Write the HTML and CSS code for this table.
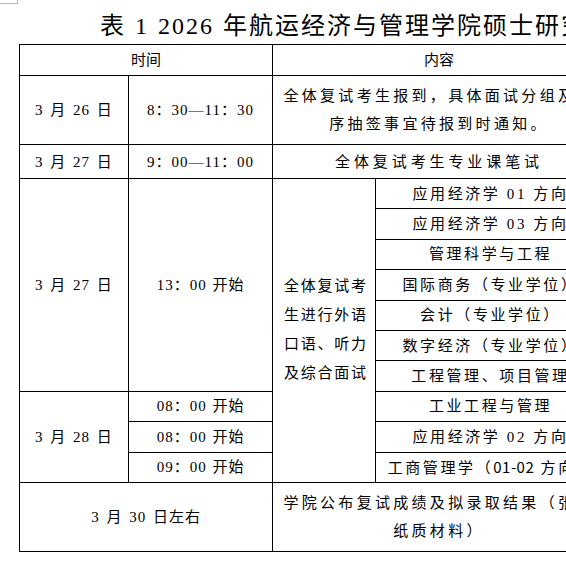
FILE: index.html
```html
<!DOCTYPE html>
<html lang="zh-CN">
<head>
<meta charset="utf-8">
<title>复试安排</title>
<link rel="stylesheet" href="styles.css">
</head>
<body>
<div class="page">
  <div class="corner-mark"></div>
  <h1 class="title">表 1 2026 年航运经济与管理学院硕士研究生复试日程安排</h1>
  <table class="schedule">
    <colgroup>
      <col class="c-date">
      <col class="c-time">
      <col class="c-group">
      <col class="c-major">
    </colgroup>
    <tr class="r-head">
      <td colspan="2" class="plain">时间</td>
      <td colspan="2" class="plain">内容</td>
    </tr>
    <tr class="r-tall">
      <td class="date">3 月 26 日</td>
      <td class="time">8：30—11：30</td>
      <td colspan="2" class="wide">全体复试考生报到，具体面试分组及顺<br>序抽签事宜待报到时通知。</td>
    </tr>
    <tr class="r-mid">
      <td class="date">3 月 27 日</td>
      <td class="time">9：00—11：00</td>
      <td colspan="2" class="wide2">全体复试考生专业课笔试</td>
    </tr>
    <tr class="r-sub">
      <td rowspan="7" class="date">3 月 27 日</td>
      <td rowspan="7" class="time">13：00 开始</td>
      <td rowspan="10" class="group">全体复试考<br>生进行外语<br>口语、听力<br>及综合面试</td>
      <td class="major">应用经济学 01 方向</td>
    </tr>
    <tr class="r-sub"><td class="major">应用经济学 03 方向</td></tr>
    <tr class="r-sub"><td class="major">管理科学与工程</td></tr>
    <tr class="r-sub"><td class="major">国际商务（专业学位）</td></tr>
    <tr class="r-sub"><td class="major">会计（专业学位）</td></tr>
    <tr class="r-sub"><td class="major">数字经济（专业学位）</td></tr>
    <tr class="r-sub"><td class="major">工程管理、项目管理</td></tr>
    <tr class="r-sub">
      <td rowspan="3" class="date">3 月 28 日</td>
      <td class="time">08：00 开始</td>
      <td class="major">工业工程与管理</td>
    </tr>
    <tr class="r-sub">
      <td class="time">08：00 开始</td>
      <td class="major">应用经济学 02 方向</td>
    </tr>
    <tr class="r-sub">
      <td class="time">09：00 开始</td>
      <td class="major">工商管理学（<span class="sans">01-02</span> 方向）</td>
    </tr>
    <tr class="r-tall">
      <td colspan="2" class="date">3 月 30 日左右</td>
      <td colspan="2" class="wide">学院公布复试成绩及拟录取结果（张贴<br>纸质材料）</td>
    </tr>
  </table>
</div>
</body>
</html>
```

FILE: styles.css
```css
html {
  overflow: hidden;
  background: #ffffff;
}

body {
  margin: 0;
  color: #000000;
  font-family: "Liberation Serif", "Noto Sans CJK SC", serif;
}

.page {
  width: 640px;
}

.corner-mark {
  width: 17px;
  height: 3px;
  border-right: 1px solid #b8b8b8;
  border-bottom: 1px solid #b8b8b8;
}

.title {
  margin: 10px 0 6px 0;
  padding-left: 100px;
  font-size: 24px;
  line-height: 24px;
  font-weight: normal;
  letter-spacing: 2px;
  word-spacing: 1px;
  white-space: nowrap;
}

.schedule {
  margin-left: 19px;
  border-collapse: collapse;
  table-layout: fixed;
  width: 586px;
  font-size: 15px;
}

.c-date { width: 109px; }
.c-time { width: 144px; }
.c-group { width: 103px; }
.c-major { width: 230px; }

.schedule td {
  border: 1px solid #000000;
  padding: 0;
  text-align: center;
  vertical-align: middle;
  white-space: nowrap;
  line-height: 28px;
}

.r-head { height: 31px; }
.r-tall { height: 69px; }
.r-mid { height: 34px; }
.r-sub { height: 30.4px; }

.schedule td.plain {
  letter-spacing: 0;
}

.schedule td.date {
  letter-spacing: 1px;
  word-spacing: 2px;
}

.schedule td.time {
  letter-spacing: 1px;
  word-spacing: 1px;
}

.schedule td.wide {
  letter-spacing: 3.3px;
}

.schedule td.wide2 {
  letter-spacing: 3.9px;
}

.schedule td.group {
  text-align: left;
  padding-left: 11px;
  letter-spacing: 1.75px;
  line-height: 29px;
}

.schedule td.major {
  letter-spacing: 2.6px;
}

.sans {
  font-family: "Noto Sans CJK SC", sans-serif;
  letter-spacing: 0.5px;
}
```
